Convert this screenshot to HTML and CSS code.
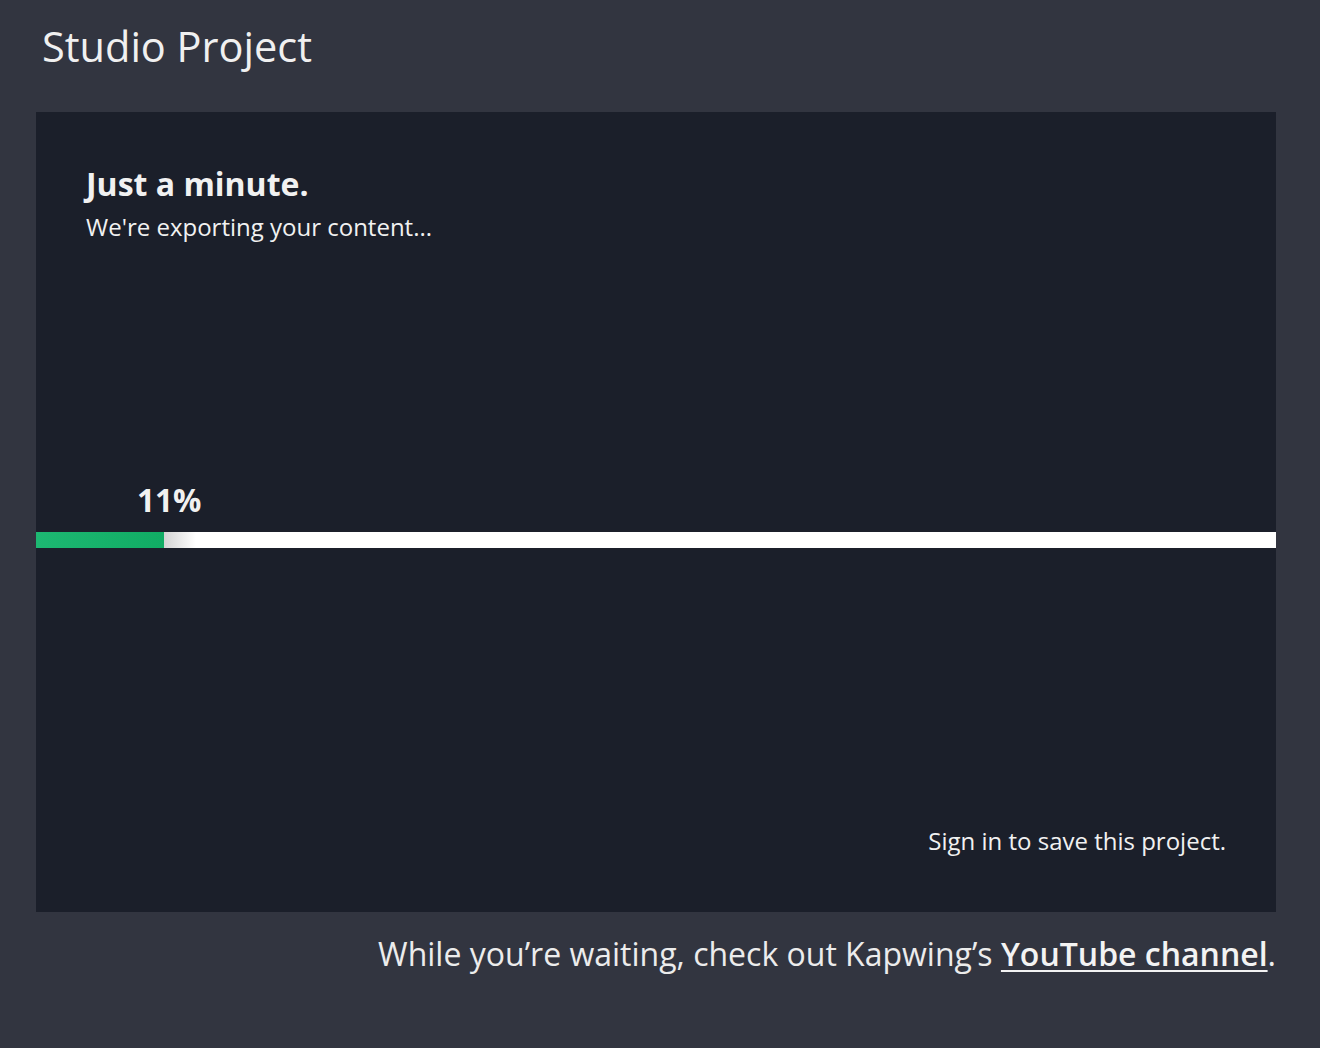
FILE: index.html
```html
<!DOCTYPE html>
<html>
<head>
<meta charset="utf-8">
<link rel="stylesheet" href="styles.css">
</head>
<body>
<div class="page">
  <h1 class="title">Studio Project</h1>
  <div class="panel">
    <div class="intro">
      <div class="heading">Just a minute.</div>
      <div class="sub">We're exporting your content...</div>
    </div>
    <div class="progress">
      <div class="percent">11%</div>
      <div class="track"><div class="fill" style="width:128px"></div><div class="fade"></div></div>
    </div>
    <div class="signin">Sign in to save this project.</div>
  </div>
  <div class="footer">While you’re waiting, check out Kapwing’s <a class="link" href="#">YouTube channel</a>.</div>
</div>
</body>
</html>
```

FILE: styles.css
```css
html, body {
  margin: 0;
  padding: 0;
  background: #323540;
  font-family: "Open Sans", "Liberation Sans", sans-serif;
  color: #f1f1f1;
}
.page {
  width: 1240px;
  padding: 0 44px 0 36px;
  height: 1048px;
}
.title {
  margin: 0;
  padding: 18px 0 0 6px;
  height: 112px;
  box-sizing: border-box;
  font-size: 41.5px;
  font-weight: 400;
  line-height: 56px;
  color: #f0f0f0;
}
.panel {
  background: #1b1f2a;
  height: 800px;
  display: flex;
  flex-direction: column;
}
.intro {
  padding: 50px 0 0 50px;
}
.heading {
  font-size: 32px;
  font-weight: 700;
  line-height: 44px;
}
.sub {
  font-size: 24px;
  line-height: 32px;
  margin-top: 5px;
}
.progress {
  margin-top: 237px;
}
.percent {
  font-size: 31.5px;
  font-weight: 700;
  padding-left: 101px;
  line-height: 40px;
  margin-bottom: 12px;
}
.track {
  height: 16px;
  background: #ffffff;
  display: flex;
}
.fill {
  background: linear-gradient(90deg, #1db872, #11ac64);
  height: 100%;
}
.fade {
  width: 32px;
  background: linear-gradient(90deg, #d4d4d4, #ffffff);
}
.signin {
  margin-top: auto;
  align-self: flex-end;
  padding: 0 50px 55px 0;
  font-size: 24px;
  line-height: 32px;
}
.footer {
  text-align: right;
  font-size: 32px;
  font-weight: 400;
  padding-top: 20px;
  line-height: 44px;
  color: #ececec;
}
.link {
  color: #f3f3f3;
  font-weight: 600;
  text-decoration: underline;
  text-underline-offset: 4px;
  text-decoration-thickness: 2px;
}
```
